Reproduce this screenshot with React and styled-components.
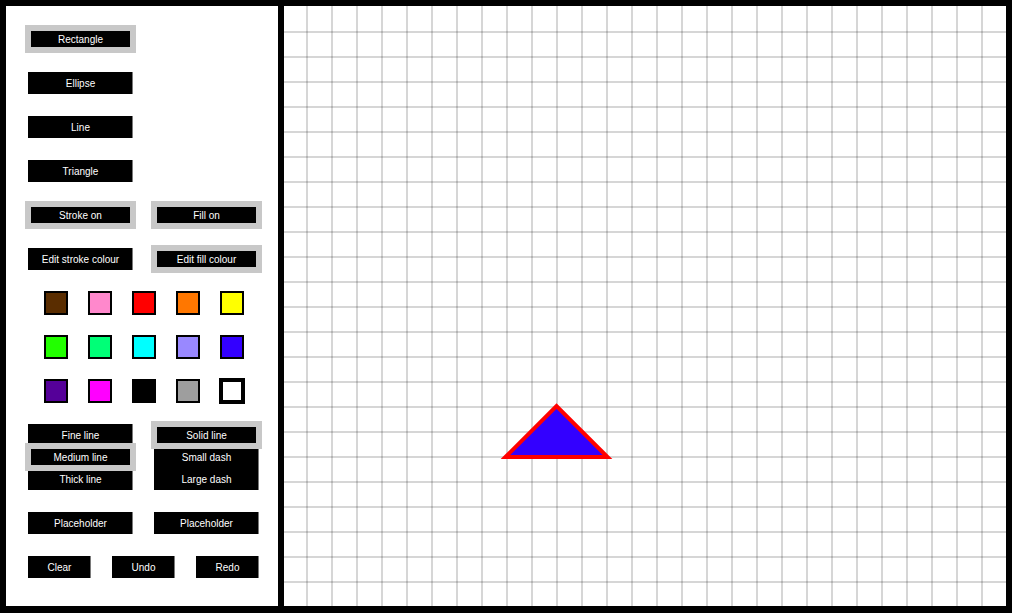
import React from 'react';
import styled, { createGlobalStyle, css } from 'styled-components';

const GlobalStyle = createGlobalStyle`
  html, body { margin: 0; padding: 0; background: #000; }
  body { font-family: "Liberation Sans", Arial, sans-serif; }
  * { box-sizing: border-box; }
`;

const Screen = styled.div`
  display: flex;
  gap: 6px;
  padding: 6px 6px 7px 6px;
  width: 1012px;
  height: 613px;
  background: #000;
`;

const Panel = styled.aside`
  width: 272px;
  height: 600px;
  flex: none;
  background: #fff;
  padding: 22px 19px 0 22px;
  display: flex;
  flex-direction: column;
  gap: 22px;
`;

const SingleRow = styled.div`
  display: flex;
  height: 22px;
`;

const PairRow = styled.div`
  display: grid;
  grid-template-columns: 105px 105px;
  column-gap: 21px;
  height: ${(p) => p.$h || '22px'};
`;

const TripleRow = styled.div`
  display: grid;
  grid-template-columns: repeat(3, 1fr);
  column-gap: 21px;
  height: 22px;
`;

const Stack = styled.div`
  display: flex;
  flex-direction: column;
`;

const ToolButton = styled.button`
  width: ${(p) => p.$w || '100%'};
  height: 22px;
  flex: none;
  margin: 0;
  padding: 1px 0 0 0;
  border: 0;
  background: #000;
  color: #fff;
  font: 10px "Liberation Sans", Arial, sans-serif;
  line-height: 21px;
  text-align: center;
  box-shadow: inset -1px 0 0 #7a7a7a;
  ${(p) =>
    p.$active &&
    css`
      position: relative;
      z-index: 1;
      box-shadow: 0 0 0 3px #c8c8c8, inset 0 0 0 3px #c8c8c8;
    `}
`;

const SwatchRow = styled.div`
  display: grid;
  grid-template-columns: repeat(5, 24px);
  column-gap: 20px;
  justify-content: center;
  height: 22px;
`;

const Swatch = styled.button`
  width: 24px;
  height: 24px;
  margin: -1px 0;
  padding: 0;
  border: 2px solid #000;
  background: ${(p) => p.$c};
  ${(p) =>
    p.$active &&
    css`
      width: 26px;
      height: 26px;
      margin: -2px -1px;
      border-width: 4px;
    `}
`;

const Canvas = styled.div`
  flex: 1;
  height: 600px;
  background: #fff;
`;

const DrawingSvg = styled.svg`
  display: block;
`;

const palette = [
  ['#5a2d00', '#ff88cc', '#ff0000', '#ff7700', '#ffff00'],
  ['#22ff00', '#00ff77', '#00ffff', '#9988ff', '#3300ff'],
  ['#550099', '#ff00ff', '#000000', '#9e9e9e', '#ffffff'],
];

const W = 722;
const H = 600;
const vLines = Array.from({ length: 28 }, (_, k) => 23 + 25 * k);
const hLines = Array.from({ length: 23 }, (_, k) => 26 + 25 * k);

export default function App() {
  return (
    <>
      <GlobalStyle />
      <Screen>
        <Panel>
          <SingleRow>
            <ToolButton $w="105px" $active>Rectangle</ToolButton>
          </SingleRow>
          <SingleRow>
            <ToolButton $w="105px">Ellipse</ToolButton>
          </SingleRow>
          <SingleRow>
            <ToolButton $w="105px">Line</ToolButton>
          </SingleRow>
          <SingleRow>
            <ToolButton $w="105px">Triangle</ToolButton>
          </SingleRow>
          <PairRow>
            <ToolButton $active>Stroke on</ToolButton>
            <ToolButton $active>Fill on</ToolButton>
          </PairRow>
          <PairRow>
            <ToolButton>Edit stroke colour</ToolButton>
            <ToolButton $active>Edit fill colour</ToolButton>
          </PairRow>
          {palette.map((row, i) => (
            <SwatchRow key={i}>
              {row.map((c, j) => (
                <Swatch key={j} $c={c} $active={i === 2 && j === 4} aria-label={c} />
              ))}
            </SwatchRow>
          ))}
          <PairRow $h="66px">
            <Stack>
              <ToolButton>Fine line</ToolButton>
              <ToolButton $active>Medium line</ToolButton>
              <ToolButton>Thick line</ToolButton>
            </Stack>
            <Stack>
              <ToolButton $active>Solid line</ToolButton>
              <ToolButton>Small dash</ToolButton>
              <ToolButton>Large dash</ToolButton>
            </Stack>
          </PairRow>
          <PairRow>
            <ToolButton>Placeholder</ToolButton>
            <ToolButton>Placeholder</ToolButton>
          </PairRow>
          <TripleRow>
            <ToolButton>Clear</ToolButton>
            <ToolButton>Undo</ToolButton>
            <ToolButton>Redo</ToolButton>
          </TripleRow>
        </Panel>
        <Canvas>
          <DrawingSvg width={W} height={H} viewBox={`0 0 ${W} ${H}`}>
            {vLines.map((x) => (
              <line key={`v${x}`} x1={x} y1={0} x2={x} y2={H} stroke="rgba(0,0,0,0.16)" strokeWidth="2" />
            ))}
            {hLines.map((y) => (
              <line key={`h${y}`} x1={0} y1={y} x2={W} y2={y} stroke="rgba(0,0,0,0.16)" strokeWidth="2" />
            ))}
            <polygon
              points="221.5,451 272.5,400 323.5,451"
              fill="#3300ff"
              stroke="#ff0000"
              strokeWidth="4"
              strokeLinejoin="miter"
            />
          </DrawingSvg>
        </Canvas>
      </Screen>
    </>
  );
}
